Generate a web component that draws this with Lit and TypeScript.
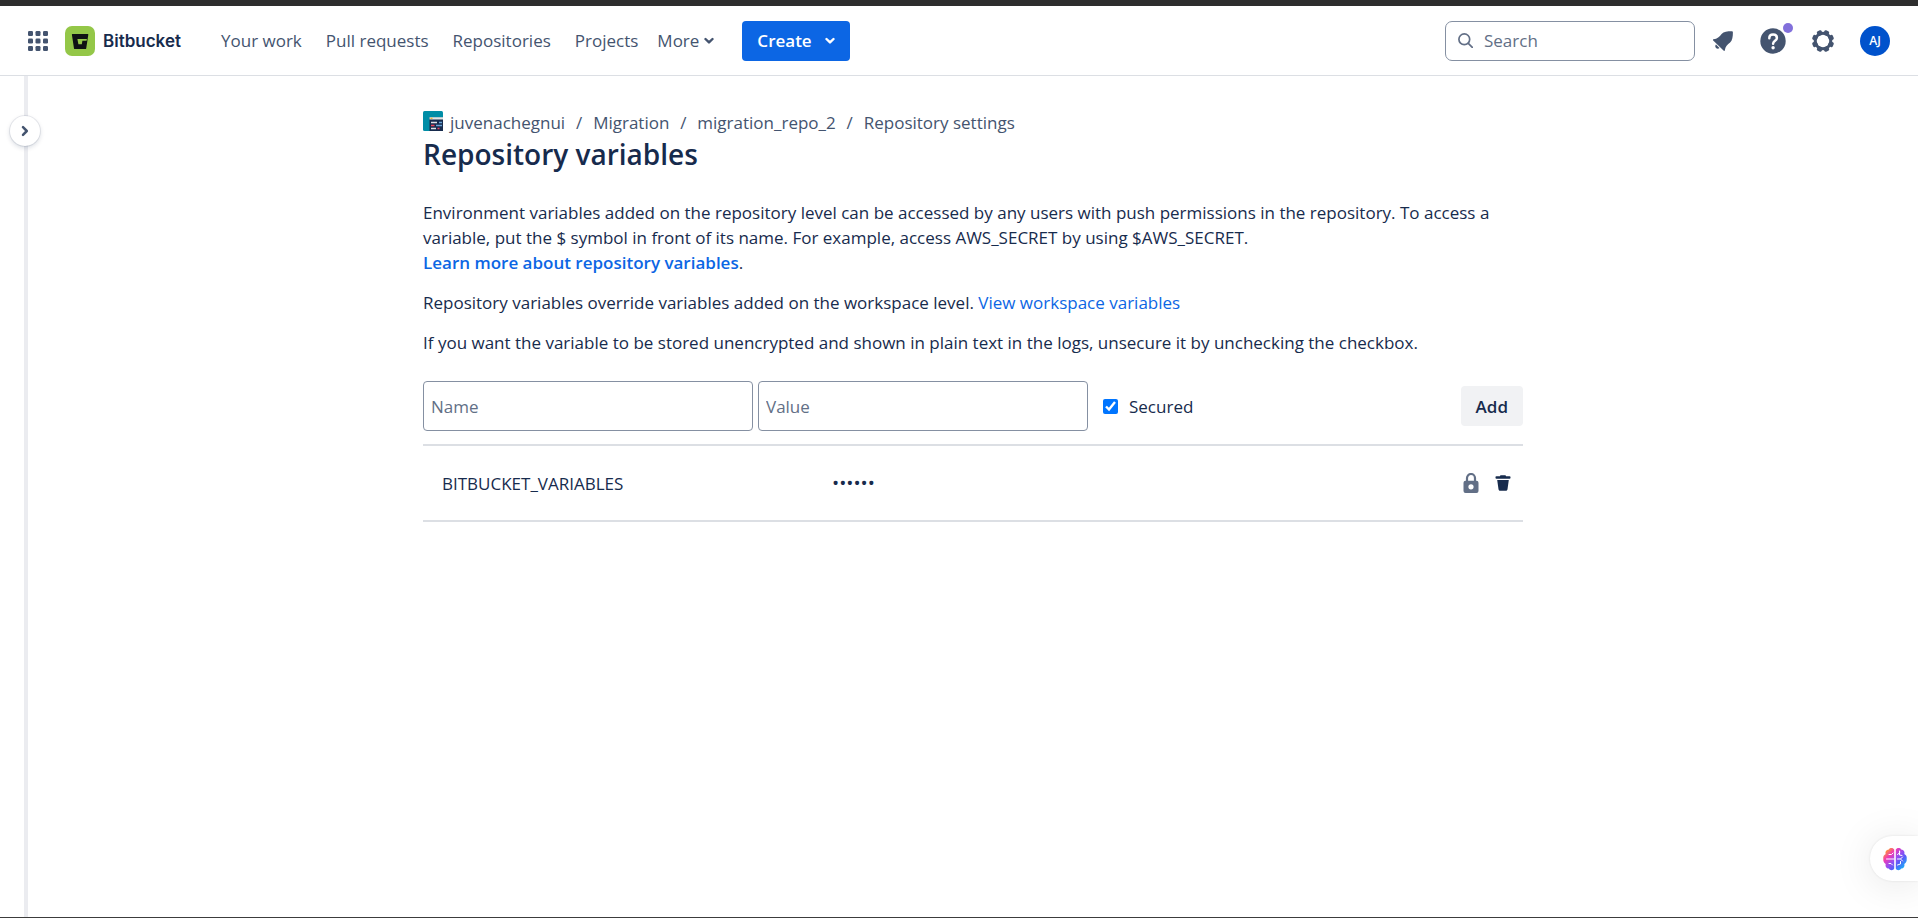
import { LitElement, html, css, svg } from "lit";
import { customElement, state } from "lit/decorators.js";

const chevronDown = html`<svg class="chevron" viewBox="0 0 10 8" width="10" height="8" aria-hidden="true">
  <path d="M1.5 2 5 5.4 8.5 2" fill="none" stroke="currentColor" stroke-width="2.4" stroke-linecap="round" stroke-linejoin="round" />
</svg>`;

const gearTeeth = [0, 45, 90, 135, 180, 225, 270, 315];

@customElement("app-header")
class AppHeader extends LitElement {
  static styles = css`
    :host {
      display: block;
    }
    .bar {
      display: flex;
      align-items: center;
      height: 69px;
      padding: 0 28px;
      border-bottom: 1px solid #dcdfe4;
      color: #44546f;
    }
    button {
      display: flex;
      align-items: center;
      justify-content: center;
      margin: 0;
      padding: 0;
      border: 0;
      background: none;
      color: inherit;
      font: inherit;
      cursor: pointer;
    }
    svg {
      display: block;
    }
    a {
      color: inherit;
      text-decoration: none;
    }
    .brand {
      display: flex;
      align-items: center;
      gap: 8px;
      margin-left: 17px;
      color: #172b4d;
      font: 600 17px/24px Inter, sans-serif;
    }
    nav {
      display: flex;
      align-items: center;
      gap: 24px;
      margin-left: 40px;
      font-weight: 500;
    }
    .more {
      gap: 5px;
      margin-left: -5px;
    }
    .create {
      gap: 13px;
      height: 40px;
      margin-left: 28px;
      padding: 0 15px;
      border-radius: 4px;
      background: #0c66e4;
      color: #fff;
      font-weight: 600;
    }
    .tools {
      display: flex;
      align-items: center;
      margin-left: auto;
    }
    .search {
      display: flex;
      align-items: center;
      gap: 11px;
      box-sizing: border-box;
      width: 250px;
      height: 40px;
      padding: 0 12px;
      border: 1px solid #8590a2;
      border-radius: 7px;
      color: #626f86;
    }
    .search input {
      flex: 1;
      min-width: 0;
      padding: 0;
      border: 0;
      outline: 0;
      background: none;
      color: #172b4d;
      font: inherit;
    }
    .search input::placeholder {
      color: #626f86;
      opacity: 1;
    }
    .icons {
      display: flex;
      align-items: center;
      gap: 20px;
      margin-left: 13px;
    }
    .icons button {
      position: relative;
      width: 30px;
      height: 30px;
    }
    .dot {
      position: absolute;
      top: -3px;
      right: -5px;
      width: 10px;
      height: 10px;
      border-radius: 50%;
      background: #8270db;
    }
    .icons .avatar {
      margin-left: 2px;
      border-radius: 50%;
      background: #0052cc;
      color: #fff;
      font-size: 12px;
      font-weight: 600;
    }
  `;

  render() {
    return html`
      <header class="bar">
        <button aria-label="Switch to">
          <svg viewBox="0 0 20 20" width="20" height="20" fill="currentColor">
            ${[0, 7.5, 15].map((y) => [0, 7.5, 15].map((x) => svg`<rect x=${x} y=${y} width="5" height="5" rx="1.2" />`))}
          </svg>
        </button>
        <a class="brand" href="#">
          <svg viewBox="0 0 30 30" width="30" height="30" aria-hidden="true">
            <rect width="30" height="30" rx="7" fill="#94c748" />
            <path fill="#101214" fill-rule="evenodd" d="M7.4 8h15.4c.4 0 .6.3.5.7l-2.1 13.7c0 .4-.3.6-.7.6H9.8c-.4 0-.7-.3-.8-.6L6.9 8.7c-.1-.4.1-.7.5-.7ZM12.400 13l1 5.200h3.400l.6-3.500h4.200l.3-1.700Z" />
          </svg>
          <span>Bitbucket</span>
        </a>
        <nav>
          <a href="#">Your work</a>
          <a href="#">Pull requests</a>
          <a href="#">Repositories</a>
          <a href="#">Projects</a>
          <button class="more">More ${chevronDown}</button>
        </nav>
        <button class="create">Create ${chevronDown}</button>
        <div class="tools">
          <label class="search">
            <svg viewBox="0 0 15 15" width="15" height="15" fill="none" stroke="currentColor" stroke-width="1.7" aria-hidden="true">
              <circle cx="6.3" cy="6.3" r="5.4" />
              <path d="m10.3 10.3 4 4" stroke-linecap="round" />
            </svg>
            <input type="search" placeholder="Search" aria-label="Search" />
          </label>
          <div class="icons">
            <button aria-label="Notifications">
              <svg viewBox="0 0 20 20" width="20" height="20" fill="currentColor">
                <path d="M.6 8.200C4.200 8 6.500 5.600 8.600 2.900 10.700.600 14.400.200 18.600.200c.9 0 1.300.4 1.300 1.300 0 4.300-.5 8-2.800 10.100-2.600 2.100-4.900 4.300-5.200 7.500 0 .9-.8 1.100-1.400.5L.200 9.600c-.6-.6-.4-1.400.4-1.400Z" />
                <path d="M3 13.600 6.500 17c-1 1-2.500 1-3.500 0s-1-2.400 0-3.400Z" />
              </svg>
            </button>
            <button aria-label="Help">
              <svg viewBox="0 0 26 26" width="26" height="26">
                <circle cx="13" cy="13" r="12.700" fill="currentColor" />
                <path d="M9.300 10.200c0-2.300 1.600-3.700 3.800-3.700s3.800 1.400 3.800 3.400c0 2.900-3.800 3-3.800 5.900" fill="none" stroke="#fff" stroke-width="2.500" stroke-linecap="round" />
                <circle cx="13.100" cy="19.800" r="1.700" fill="#fff" />
              </svg>
              <span class="dot"></span>
            </button>
            <button aria-label="Settings">
              <svg viewBox="0 0 24 24" width="24" height="24">
                ${gearTeeth.map((a) => svg`<rect x="9.400" y=".9" width="5.200" height="5" rx="1.500" fill="currentColor" transform="rotate(${a + 22.5} 12 12)" />`)}
                <circle cx="12" cy="12" r="7.800" fill="none" stroke="currentColor" stroke-width="3" />
              </svg>
            </button>
            <button class="avatar" aria-label="Account">AJ</button>
          </div>
        </div>
      </header>
    `;
  }
}

interface Variable {
  name: string;
  value: string;
}

@customElement("repository-variables")
class RepositoryVariables extends LitElement {
  @state() private variables: Variable[] = [{ name: "BITBUCKET_VARIABLES", value: "••••••" }];

  static styles = css`
    :host {
      display: block;
      max-width: 1100px;
      margin: 0 auto;
      padding: 35px 0;
    }
    a {
      color: #0c66e4;
      text-decoration: none;
    }
    svg {
      display: block;
    }
    .crumbs {
      display: flex;
      align-items: center;
      margin: 0;
      padding: 0;
      line-height: 23px;
      list-style: none;
    }
    .crumbs li {
      display: flex;
      align-items: center;
    }
    .crumbs li + li::before {
      content: "/";
      width: 28px;
      color: #44546f;
      text-align: center;
    }
    .crumbs a {
      display: flex;
      align-items: flex-start;
      gap: 7px;
      color: #44546f;
    }
    h1 {
      margin: 0 0 26px;
      font-size: 28px;
      font-weight: 600;
      line-height: 40px;
    }
    p {
      margin: 0 0 15px;
    }
    .strong {
      font-weight: 600;
    }
    form {
      display: flex;
      align-items: center;
      margin: 26px 0 13px;
    }
    .field {
      box-sizing: border-box;
      flex: 0 1 330px;
      min-width: 0;
      height: 50px;
      margin: 0 5px 0 0;
      padding: 0 7px;
      border: 1px solid #8590a2;
      border-radius: 4px;
      background: #fff;
      color: #172b4d;
      font: inherit;
    }
    .field::placeholder {
      color: #626f86;
      opacity: 1;
    }
    .secured {
      display: flex;
      align-items: center;
      gap: 11px;
      margin-left: 10px;
    }
    .secured input {
      width: 15px;
      height: 15px;
      margin: 0;
      accent-color: #0075ff;
    }
    .add {
      height: 40px;
      margin-left: auto;
      padding: 0 15px;
      border: 0;
      border-radius: 4px;
      background: #f1f2f4;
      color: #172b4d;
      font: inherit;
      font-weight: 600;
    }
    table {
      width: 100%;
      border-collapse: separate;
      border-spacing: 0;
      border-top: 2px solid #dcdfe4;
      table-layout: fixed;
    }
    td {
      height: 74px;
      padding: 0;
      border-bottom: 2px solid #dcdfe4;
    }
    .name {
      width: 390px;
      padding-left: 19px;
    }
    .value {
      font-size: 19px;
    }
    .actions {
      display: flex;
      align-items: center;
      justify-content: flex-end;
      gap: 16px;
      padding-right: 12px;
      color: #626f86;
    }
    .actions button {
      padding: 0;
      border: 0;
      background: none;
      color: #172b4d;
    }
  `;

  render() {
    return html`
      <nav aria-label="Breadcrumb">
        <ol class="crumbs">
          <li>
            <a href="#">
              <svg viewBox="0 0 20 20" width="20" height="20" aria-hidden="true">
                <rect width="20" height="20" rx="1.500" fill="#008da6" />
                <path d="M6.500 6.500H20V20H6.500Z" fill="#172b4d" />
                <path d="M6.500 6.200H20v2.300H6.500Z" fill="#dfe5e5" />
                <path d="M7.500 6.800h2v1h-2Z" fill="#ffab00" />
                <path d="M8 11.500h6M8 17.500h5" stroke="#dfe1e6" stroke-width="1.300" />
                <path d="M16 11.500h3M13 14.500h6" stroke="#6aa5d8" stroke-width="1.300" />
                <path d="M8 14.500h3.500M14.500 17.500h2" stroke="#f0435a" stroke-width="1.300" />
              </svg>
              juvenachegnui
            </a>
          </li>
          <li><a href="#">Migration</a></li>
          <li><a href="#">migration_repo_2</a></li>
          <li><a href="#">Repository settings</a></li>
        </ol>
      </nav>
      <h1>Repository variables</h1>
      <p>
        Environment variables added on the repository level can be accessed by any users with push permissions in the
        repository. To access a variable, put the $ symbol in front of its name. For example, access AWS_SECRET by using
        $AWS_SECRET.<br />
        <a class="strong" href="#">Learn more about repository variables</a>.
      </p>
      <p>
        Repository variables override variables added on the workspace level.
        <a href="#">View workspace variables</a>
      </p>
      <p>
        If you want the variable to be stored unencrypted and shown in plain text in the logs, unsecure it by unchecking
        the checkbox.
      </p>
      <form @submit=${(e: Event) => e.preventDefault()}>
        <input class="field" type="text" placeholder="Name" aria-label="Name" />
        <input class="field" type="text" placeholder="Value" aria-label="Value" />
        <label class="secured"><input type="checkbox" checked />Secured</label>
        <button class="add">Add</button>
      </form>
      <table>
        <tbody>
          ${this.variables.map(
            (v) => html`
              <tr>
                <td class="name">${v.name}</td>
                <td class="value">${v.value}</td>
                <td>
                  <div class="actions">
                    <svg viewBox="0 0 16 20" width="16" height="20" role="img" aria-label="Secured">
                      <path d="M4 9V5a4 4 0 0 1 8 0v4" fill="none" stroke="currentColor" stroke-width="2.200" />
                      <path fill="currentColor" fill-rule="evenodd" d="M2.500 7.700h11A2 2 0 0 1 15.500 9.700V18a2 2 0 0 1-2 2h-11a2 2 0 0 1-2-2V9.700a2 2 0 0 1 2-2ZM8 11.200a2.600 2.600 0 1 0 0 5.200 2.600 2.600 0 0 0 0-5.200Z" />
                    </svg>
                    <button aria-label="Delete variable">
                      <svg viewBox="0 0 16 16" width="16" height="16" fill="currentColor">
                        <path d="M5 1.200C5 .500 5.500.200 6.200.200h3.600c.7 0 1.200.3 1.200 1h3.600c.6 0 .9.300.9.9v.7c0 .6-.3.9-.9.9H1.400c-.6 0-.9-.3-.9-.9v-.7c0-.6.3-.9.9-.9Z" />
                        <path d="M2.200 5h11.600L12.500 14.300c-.1.900-.7 1.500-1.600 1.500H5.100c-.9 0-1.500-.6-1.600-1.500Z" />
                      </svg>
                    </button>
                  </div>
                </td>
              </tr>
            `,
          )}
        </tbody>
      </table>
    `;
  }
}

@customElement("app-root")
class AppRoot extends LitElement {
  static styles = css`
    :host {
      display: flex;
      flex-direction: column;
      box-sizing: border-box;
      min-height: 100vh;
      border-top: 6px solid #2e2e2e;
      border-bottom: 1px solid #3c3c3c;
      background: #fff;
      color: #172b4d;
      font: 400 17px/25px "Open Sans", "Noto Sans", sans-serif;
    }
    .body {
      display: flex;
      flex: 1;
    }
    .rail {
      position: relative;
      box-sizing: border-box;
      width: 28px;
      border-right: 4px solid #ebecf0;
    }
    .expand {
      position: absolute;
      top: 40px;
      left: 10px;
      display: flex;
      align-items: center;
      justify-content: center;
      width: 30px;
      height: 30px;
      padding: 0;
      border: 0;
      border-radius: 50%;
      background: #fff;
      box-shadow: 0 0 0 1px #091e4214, 0 2px 5px #091e4229;
      color: #44546f;
    }
    main {
      flex: 1;
      min-width: 0;
    }
    .assistant {
      position: fixed;
      right: 0;
      bottom: 37px;
      display: flex;
      align-items: center;
      box-sizing: border-box;
      width: 48px;
      height: 45px;
      padding: 0 0 0 13px;
      border: 0;
      border-radius: 23px 0 0 23px;
      background: #fff;
      box-shadow: 0 0 3px #0000001a, 0 4px 40px #0000001a;
    }
  `;

  render() {
    return html`
      <app-header></app-header>
      <div class="body">
        <aside class="rail">
          <button class="expand" aria-label="Expand sidebar">
            <svg viewBox="0 0 8 12" width="8" height="12" aria-hidden="true">
              <path d="M2 2.200 5.800 6 2 9.800" fill="none" stroke="currentColor" stroke-width="2.500" stroke-linecap="round" stroke-linejoin="round" />
            </svg>
          </button>
        </aside>
        <main><repository-variables></repository-variables></main>
      </div>
      <button class="assistant" aria-label="Assistant">
        <svg viewBox="0 0 24 24" width="24" height="24" aria-hidden="true">
          <defs>
            <linearGradient id="brain" gradientUnits="userSpaceOnUse" x1="3" y1="3" x2="21" y2="21">
              <stop offset="0" stop-color="#ff9d2e" />
              <stop offset=".25" stop-color="#f03bb4" />
              <stop offset=".5" stop-color="#9a4df0" />
              <stop offset=".7" stop-color="#5a5cf8" />
              <stop offset="1" stop-color="#17b1f7" />
            </linearGradient>
          </defs>
          <path fill="url(#brain)" d="M11.200 2.500C10.500.600 7 .200 5.800 2.400 3.300 2.500 1.900 4.800 2.700 7 .600 8 0 9.800.300 12c-.2 2 .5 4 2.400 4.900-.7 2.400.8 4.600 3.100 4.700 1.300 2.300 4.800 1.900 5.400-.1ZM12.800 2.500c.7-1.900 4.200-2.300 5.400-.1 2.500.1 3.900 2.400 3.100 4.600 2.100 1 2.700 2.800 2.400 5 .2 2-.5 4-2.400 4.900.7 2.400-.8 4.600-3.100 4.700-1.300 2.300-4.800 1.900-5.400-.1Z" />
          <path fill="none" stroke="#fff" stroke-width="1" stroke-linecap="round" d="M3.500 12h7.500M6 7.500h2.500L10 6M6 16.500h2L9.500 18M14.500 7.500 17 5.500M16.500 4v4l2.500.5M14.500 12h3l2-2M17.500 12l2 2M14.500 18l3-1v-2.500" />
        </svg>
      </button>
    `;
  }
}
